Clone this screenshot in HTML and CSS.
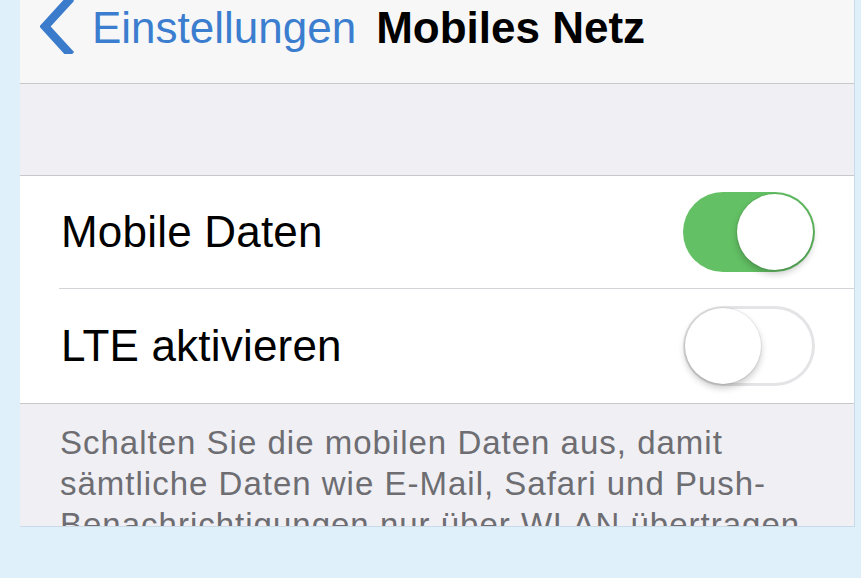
FILE: index.html
```html
<!DOCTYPE html>
<html lang="de">
<head>
    <meta charset="UTF-8">
    <meta name="viewport" content="width=device-width, initial-scale=1.0">
    <title>Mobiles Netz</title>
    <link rel="stylesheet" href="styles.css">
</head>
<body>
    <div class="screen">
        <nav class="navbar">
            <svg class="back-icon" width="34" height="54" viewBox="0 0 34 54">
                <path d="M31 -2 L5 26.5 L31 55" fill="none" stroke="#3b7bcc" stroke-width="8.5" stroke-linejoin="miter"/>
            </svg>
            <span class="back-label">Einstellungen</span>
            <span class="navbar-title">Mobiles Netz</span>
        </nav>
        <div class="spacer"></div>
        <div class="table">
            <div class="cell">
                <span class="cell-label">Mobile Daten</span>
                <div class="switch on"><div class="knob"></div></div>
            </div>
            <div class="cell">
                <span class="cell-label">LTE aktivieren</span>
                <div class="switch"><div class="knob"></div></div>
            </div>
        </div>
        <p class="footer">Schalten Sie die mobilen Daten aus, damit sämtliche Daten wie E-Mail, Safari und Push-Benachrichtigungen nur über WLAN übertragen werden.</p>
    </div>
</body>
</html>
```

FILE: styles.css
```css
body {
    font-family: 'Liberation Sans', Arial, sans-serif;
    background-color: #dff0fb;
    margin: 0;
    padding: 0;
    color: #000;
}
.screen {
    margin-left: 20px;
    width: 834px;
    height: 526px;
    background-color: #efeff4;
    border-right: 1px solid #c9dbe8;
    border-bottom: 1px solid #c9dbe8;
    overflow: hidden;
}
.navbar {
    display: flex;
    align-items: flex-start;
    height: 83px;
    padding-left: 20px;
    background-color: #f7f7f8;
    border-bottom: 1px solid #c8c7cc;
}
.back-icon {
    margin-right: 18px;
}
.back-label,
.navbar-title {
    font-size: 44px;
    line-height: 52px;
    margin-top: 2px;
}
.back-label {
    color: #3b7dcf;
}
.navbar-title {
    font-weight: bold;
    margin-left: 20px;
}
.spacer {
    height: 91px;
    border-bottom: 1px solid #c8c7cc;
}
.table {
    background-color: #fff;
    padding-left: 39px;
    border-bottom: 1px solid #c8c7cc;
}
.cell {
    display: flex;
    justify-content: space-between;
    align-items: center;
    height: 112px;
    padding-left: 2px;
    padding-right: 39px;
}
.cell + .cell {
    border-top: 1px solid #d4d4d8;
    height: 114px;
}
.cell-label {
    font-size: 44px;
    line-height: 52px;
    letter-spacing: 0.2px;
}
.switch {
    display: flex;
    box-sizing: border-box;
    width: 132px;
    height: 80px;
    padding: 2px;
    border-radius: 40px;
    background-color: #fff;
    box-shadow: inset 0 0 0 3px #e4e4e6;
}
.switch.on {
    justify-content: flex-end;
    background-color: #63c064;
    box-shadow: none;
}
.knob {
    width: 76px;
    height: 76px;
    border-radius: 50%;
    background-color: #fff;
    box-shadow: 0 4px 7px rgba(0, 0, 0, 0.22), 0 0 0 1px rgba(0, 0, 0, 0.06);
}
.footer {
    margin: 0;
    padding: 18px 40px 0 40px;
    font-size: 33px;
    line-height: 41px;
    letter-spacing: 1px;
    color: #6d6d72;
}
```
